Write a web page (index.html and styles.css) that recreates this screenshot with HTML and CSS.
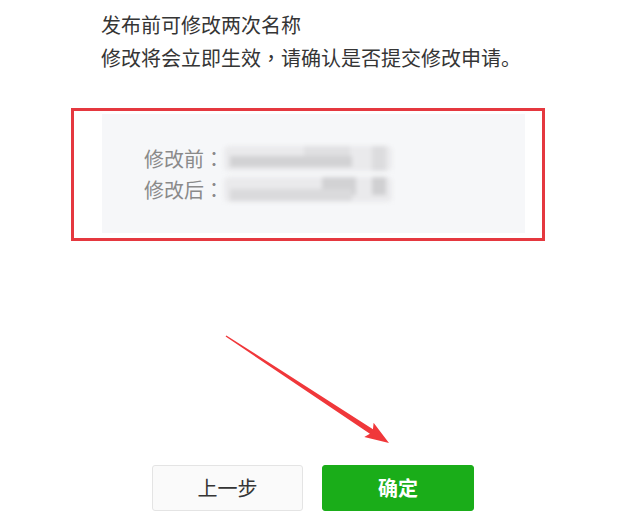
FILE: index.html
```html
<!DOCTYPE html>
<html lang="zh-CN">
<head>
<meta charset="utf-8">
<title>修改名称</title>
<link rel="stylesheet" href="styles.css">
</head>
<body>
<div class="page">
  <div class="intro">
    <p class="line">发布前可修改两次名称</p>
    <p class="line">修改将会立即生效<span class="punct" lang="zh-TW">，</span>请确认是否提交修改申请。</p>
  </div>
  <div class="highlight">
    <div class="info">
      <div class="row"><span class="label">修改前<span class="punct" lang="zh-TW">：</span></span><span class="value value-a"></span></div>
      <div class="row"><span class="label">修改后<span class="punct" lang="zh-TW">：</span></span><span class="value value-b"></span></div>
    </div>
  </div>
  <div class="actions">
    <button class="btn btn-default">上一步</button>
    <button class="btn btn-primary">确定</button>
  </div>
  <svg class="arrow" width="622" height="522" viewBox="0 0 622 522" aria-hidden="true">
    <g transform="translate(226 336) rotate(33.3)">
      <polygon points="0,-0.7 174,-2.8 171,-8.5 195,0 171,8.5 174,2.8 0,0.7" fill="#f0373a"/>
    </g>
  </svg>
</div>
</body>
</html>
```
FILE: styles.css
```css
html, body {
  margin: 0;
  padding: 0;
  background: #ffffff;
}
body {
  font-family: "Noto Sans CJK SC", "Noto Sans", sans-serif;
  width: 622px;
  height: 522px;
  overflow: hidden;
}
.page {
  position: relative;
  width: 622px;
  height: 522px;
}
.intro {
  padding: 8px 0 0 101px;
}
.line {
  margin: 0;
  font-size: 20px;
  line-height: 33px;
  color: #353535;
  white-space: nowrap;
}
.punct {
  font-family: "Noto Sans CJK TC", "Noto Sans CJK SC", sans-serif;
}
.highlight {
  margin: 34px 0 0 71px;
  border: 3px solid #e5383f;
  padding: 3px 17px 5px 28px;
  box-sizing: content-box;
  width: 423px;
  height: 119px;
}
.info {
  background: #f6f7f9;
  height: 119px;
  padding: 29px 0 0 42px;
  box-sizing: border-box;
}
.row {
  display: flex;
  align-items: center;
  height: 31px;
}
.label {
  font-size: 20px;
  line-height: 31px;
  color: #8a8a8a;
  white-space: nowrap;
  width: 80px;
}
.value {
  display: block;
  width: 168px;
  height: 25px;
  border-radius: 5px;
  filter: blur(2px);
}
.value-a {
  background:
    linear-gradient(180deg, transparent 0 42%, #d2d2d4 42% 85%, transparent 85%) 6px 0 / 122px 100% no-repeat,
    linear-gradient(#e0e0e2, #e0e0e2) 80px 0 / 46px 42% no-repeat,
    linear-gradient(#dcdcde, #dcdcde) 148px 0 / 14px 100% no-repeat,
    #eaeaec;
}
.value-b {
  background:
    linear-gradient(180deg, transparent 0 48%, #dadadc 48% 95%, transparent 95%) 6px 0 / 122px 100% no-repeat,
    linear-gradient(#d2d2d4, #d2d2d4) 98px 0 / 34px 72% no-repeat,
    linear-gradient(#d0d0d2, #d0d0d2) 148px 0 / 14px 72% no-repeat,
    #eaeaec;
}
.actions {
  display: flex;
  gap: 19px;
  margin: 224px 0 0 152px;
}
.btn {
  width: 151px;
  height: 46px;
  border-radius: 3px;
  font-family: "Noto Sans CJK SC", "Noto Sans", sans-serif;
  font-size: 20px;
  line-height: 1;
  padding: 0;
  cursor: pointer;
}
.btn-default {
  background: #fafafa;
  border: 1px solid #e4e4e4;
  color: #353535;
}
.btn-primary {
  width: 152px;
  background: #1aad19;
  border: 1px solid #1aad19;
  color: #ffffff;
  font-weight: 700;
}
.arrow {
  position: absolute;
  left: 0;
  top: 0;
  pointer-events: none;
}
```
